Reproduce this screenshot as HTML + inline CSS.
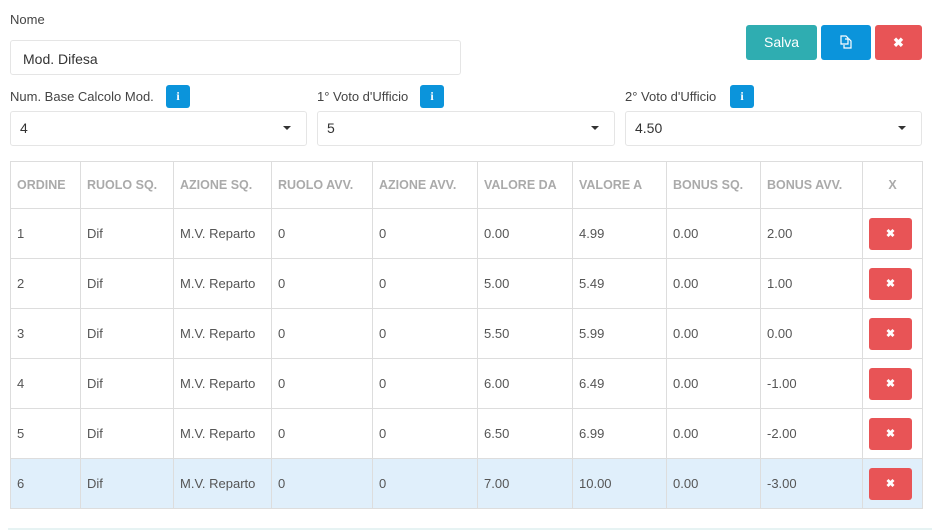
<!DOCTYPE html><html><head><style>
body{margin:0;width:939px;height:530px;background:#fff;font-family:"Liberation Sans",sans-serif;position:relative;overflow:hidden;color:#555}
.a{position:absolute}
.lbl{font-size:13px;color:#444}
.inp{position:absolute;border:1px solid #e5e5e5;border-radius:3px;background:#fff;font-size:14px;color:#333;box-sizing:border-box}
.info{position:absolute;width:24px;height:23px;background:#0b94db;border-radius:3px;color:#fff;font-size:12px;font-weight:bold;text-align:center;line-height:23px;font-family:"Liberation Serif",serif}
.car{position:absolute;right:15px;top:14px;width:0;height:0;border-left:4px solid transparent;border-right:4px solid transparent;border-top:4px solid #333}
table{position:absolute;left:10px;top:161px;border-collapse:collapse;width:912px;table-layout:fixed}
td,th{border:1px solid #ddd;padding:0 0 0 6px;text-align:left;font-size:13px;color:#555;font-weight:normal;height:49px;white-space:nowrap;overflow:hidden}
th{font-weight:bold;color:#aaa;height:46px;font-size:12.5px}
tr.h td{background:#e0effb}
.x{display:block;width:43px;height:32px;background:#e85456;border-radius:3px;color:#fff;font-size:11px;font-weight:bold;text-align:center;line-height:32px;margin-left:0}
</style></head><body>
<div class="a lbl" style="left:10px;top:12px">Nome</div>
<div class="inp" style="left:10px;top:40px;width:451px;height:35px;padding:10px 12px">Mod. Difesa</div>
<div class="a" style="left:746px;top:25px;width:71px;height:35px;background:#2fadb1;border-radius:3px;color:#fff;font-size:14px;text-align:center;line-height:35px">Salva</div>
<div class="a" style="left:821px;top:25px;width:50px;height:35px;background:#0b94db;border-radius:3px">
<svg width="50" height="35"><g fill="none" stroke="#fff" stroke-width="1.2"><path d="M20 11h5l2 2v6h-7z"/><path d="M24 14h4l2 2v7h-7v-3"/></g></svg></div>
<div class="a" style="left:875px;top:25px;width:47px;height:35px;background:#e85456;border-radius:3px;color:#fff;font-size:13px;font-weight:bold;text-align:center;line-height:35px">✖</div>

<div class="a lbl" style="left:10px;top:89px">Num. Base Calcolo Mod.</div><div class="info" style="left:166px;top:85px">i</div>
<div class="a lbl" style="left:317px;top:89px">1° Voto d'Ufficio</div><div class="info" style="left:420px;top:85px">i</div>
<div class="a lbl" style="left:625px;top:89px">2° Voto d'Ufficio</div><div class="info" style="left:730px;top:85px">i</div>
<div class="inp" style="left:10px;top:111px;width:297px;height:35px;padding:8px 9px">4<div class="car"></div></div>
<div class="inp" style="left:317px;top:111px;width:298px;height:35px;padding:8px 9px">5<div class="car"></div></div>
<div class="inp" style="left:625px;top:111px;width:297px;height:35px;padding:8px 9px">4.50<div class="car"></div></div>

<table>
<colgroup><col style="width:70px"><col style="width:93px"><col style="width:98px"><col style="width:101px"><col style="width:105px"><col style="width:95px"><col style="width:94px"><col style="width:94px"><col style="width:102px"><col style="width:60px"></colgroup>
<tr><th>ORDINE</th><th>RUOLO SQ.</th><th>AZIONE SQ.</th><th>RUOLO AVV.</th><th>AZIONE AVV.</th><th>VALORE DA</th><th>VALORE A</th><th>BONUS SQ.</th><th>BONUS AVV.</th><th style="text-align:center;padding:0">X</th></tr>
<tr><td>1</td><td>Dif</td><td>M.V. Reparto</td><td>0</td><td>0</td><td>0.00</td><td>4.99</td><td>0.00</td><td>2.00</td><td><span class="x">✖</span></td></tr>
<tr><td>2</td><td>Dif</td><td>M.V. Reparto</td><td>0</td><td>0</td><td>5.00</td><td>5.49</td><td>0.00</td><td>1.00</td><td><span class="x">✖</span></td></tr>
<tr><td>3</td><td>Dif</td><td>M.V. Reparto</td><td>0</td><td>0</td><td>5.50</td><td>5.99</td><td>0.00</td><td>0.00</td><td><span class="x">✖</span></td></tr>
<tr><td>4</td><td>Dif</td><td>M.V. Reparto</td><td>0</td><td>0</td><td>6.00</td><td>6.49</td><td>0.00</td><td>-1.00</td><td><span class="x">✖</span></td></tr>
<tr><td>5</td><td>Dif</td><td>M.V. Reparto</td><td>0</td><td>0</td><td>6.50</td><td>6.99</td><td>0.00</td><td>-2.00</td><td><span class="x">✖</span></td></tr>
<tr class="h"><td>6</td><td>Dif</td><td>M.V. Reparto</td><td>0</td><td>0</td><td>7.00</td><td>10.00</td><td>0.00</td><td>-3.00</td><td><span class="x">✖</span></td></tr>
</table>
<div class="a" style="left:8px;top:528px;width:924px;height:2px;background:#e6f3f3"></div>
</body></html>
